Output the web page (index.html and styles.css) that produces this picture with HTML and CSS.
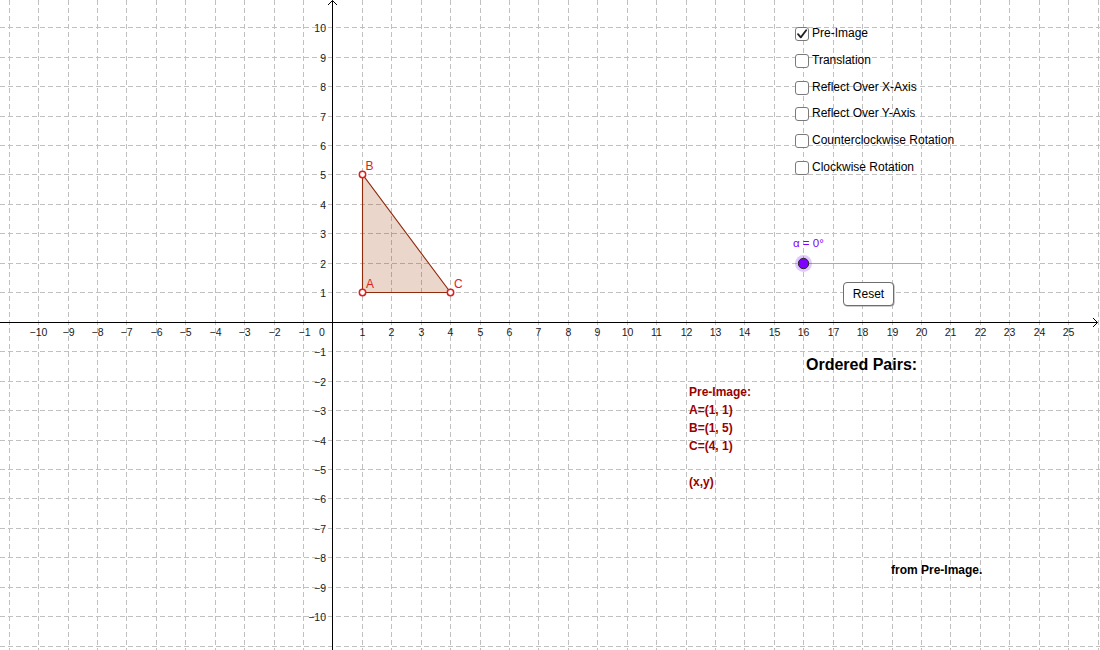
FILE: index.html
```html
<!DOCTYPE html>
<html lang="en">
<head>
<meta charset="utf-8">
<title>Transformations</title>
<link rel="stylesheet" href="styles.css">
</head>
<body>
<div class="applet">
  <svg class="graph" width="1100" height="650" viewBox="0 0 1100 650">
    <path class="grid" d="M9.5 0V650M38.5 0V650M68.5 0V650M97.5 0V650M126.5 0V650M156.5 0V650M185.5 0V650M215.5 0V650M244.5 0V650M274.5 0V650M303.5 0V650M362.5 0V650M391.5 0V650M421.5 0V650M450.5 0V650M480.5 0V650M509.5 0V650M538.5 0V650M568.5 0V650M597.5 0V650M627.5 0V650M656.5 0V650M686.5 0V650M715.5 0V650M744.5 0V650M774.5 0V650M803.5 0V650M833.5 0V650M862.5 0V650M892.5 0V650M921.5 0V650M950.5 0V650M980.5 0V650M1009.5 0V650M1039.5 0V650M1068.5 0V650M1098.5 0V650"/>
    <path class="grid" d="M0 27.5H1100M0 57.5H1100M0 86.5H1100M0 116.5H1100M0 145.5H1100M0 174.5H1100M0 204.5H1100M0 233.5H1100M0 263.5H1100M0 292.5H1100M0 351.5H1100M0 381.5H1100M0 410.5H1100M0 440.5H1100M0 469.5H1100M0 498.5H1100M0 528.5H1100M0 557.5H1100M0 587.5H1100M0 616.5H1100M0 646.5H1100"/>

    <path class="axis" d="M0 322.5H1097.5M1093 318L1097.5 322.5L1093 327M332.5 650V0.5M328 5L332.5 0.5L337 5"/>

    <g class="tick tick-x">
      <text x="38.5" y="336">−10</text><text x="68.5" y="336">−9</text><text x="97.5" y="336">−8</text>
      <text x="126.5" y="336">−7</text><text x="156.5" y="336">−6</text><text x="185.5" y="336">−5</text>
      <text x="215.5" y="336">−4</text><text x="244.5" y="336">−3</text><text x="274.5" y="336">−2</text>
      <text x="304.5" y="336">−1</text><text x="322" y="336">0</text>
      <text x="362.5" y="336">1</text><text x="391.5" y="336">2</text><text x="421.5" y="336">3</text>
      <text x="450.5" y="336">4</text><text x="480.5" y="336">5</text><text x="509.5" y="336">6</text>
      <text x="538.5" y="336">7</text><text x="568.5" y="336">8</text><text x="597.5" y="336">9</text>
      <text x="627.5" y="336">10</text><text x="656.5" y="336">11</text><text x="686.5" y="336">12</text>
      <text x="715.5" y="336">13</text><text x="744.5" y="336">14</text><text x="774.5" y="336">15</text>
      <text x="803.5" y="336">16</text><text x="833.5" y="336">17</text><text x="862.5" y="336">18</text>
      <text x="892.5" y="336">19</text><text x="921.5" y="336">20</text><text x="950.5" y="336">21</text>
      <text x="980.5" y="336">22</text><text x="1009.5" y="336">23</text><text x="1039.5" y="336">24</text>
      <text x="1068.5" y="336">25</text>
    </g>
    <g class="tick tick-y">
      <text x="326" y="31.5">10</text><text x="326" y="61.5">9</text><text x="326" y="90.5">8</text>
      <text x="326" y="120.5">7</text><text x="326" y="149.5">6</text><text x="326" y="178.5">5</text>
      <text x="326" y="208.5">4</text><text x="326" y="237.5">3</text><text x="326" y="267.5">2</text>
      <text x="326" y="296.5">1</text>
      <text x="326" y="355.5">−1</text><text x="326" y="385.5">−2</text><text x="326" y="414.5">−3</text>
      <text x="326" y="444.5">−4</text><text x="326" y="473.5">−5</text><text x="326" y="502.5">−6</text>
      <text x="326" y="532.5">−7</text><text x="326" y="561.5">−8</text><text x="326" y="591.5">−9</text>
      <text x="326" y="620.5">−10</text>
    </g>

    <polygon class="tri" points="362.5,292.5 362.5,174.5 450.5,292.5"/>
    <circle class="pt" cx="362.5" cy="292.5" r="3.2"/>
    <circle class="pt" cx="362.5" cy="174.5" r="3.2"/>
    <circle class="pt" cx="450.5" cy="292.5" r="3.2"/>
    <text class="pt-label" x="365.5" y="169.5">B</text>
    <text class="pt-label" x="366" y="288">A</text>
    <text class="pt-label" x="454" y="287.5">C</text>

    <path class="slider-line" d="M803.5 263.5H921"/>
    <circle class="slider-halo" cx="803.5" cy="263.5" r="8.5"/>
    <circle class="slider-dot" cx="803.5" cy="263.5" r="5.2"/>
    <text class="slider-label" x="793" y="247">α = 0°</text>
  </svg>

  <ul class="checks">
    <li class="check"><span class="box is-on"><svg width="12" height="12" viewBox="0 0 12 12"><path d="M2 6.2L4.8 9.4L10.2 2.2"/></svg></span><span class="check-label">Pre-Image</span></li>
    <li class="check"><span class="box"></span><span class="check-label">Translation</span></li>
    <li class="check"><span class="box"></span><span class="check-label">Reflect Over X-Axis</span></li>
    <li class="check"><span class="box"></span><span class="check-label">Reflect Over Y-Axis</span></li>
    <li class="check"><span class="box"></span><span class="check-label">Counterclockwise Rotation</span></li>
    <li class="check"><span class="box"></span><span class="check-label">Clockwise Rotation</span></li>
  </ul>

  <button class="reset" type="button">Reset</button>

  <h2 class="pairs-title">Ordered Pairs:</h2>
  <div class="pairs">
    <p class="pair-line">Pre-Image:</p>
    <p class="pair-line">A=(1, 1)</p>
    <p class="pair-line">B=(1, 5)</p>
    <p class="pair-line">C=(4, 1)</p>
    <p class="pair-line pair-gap">(x,y)</p>
  </div>

  <p class="note">from Pre-Image.</p>
</div>
</body>
</html>
```

FILE: styles.css
```css
* { box-sizing: border-box; }

html, body {
  margin: 0;
  padding: 0;
  background: #ffffff;
}

body {
  font-family: "Liberation Sans", Arial, sans-serif;
  color: #000;
  overflow: hidden;
}

.applet {
  position: relative;
  width: 1100px;
  height: 650px;
  overflow: hidden;
}

.graph {
  display: block;
}

.grid {
  fill: none;
  stroke: #c0c0c0;
  stroke-width: 1;
  stroke-dasharray: 5 3;
  shape-rendering: crispEdges;
}

.axis {
  fill: none;
  stroke: #000;
  stroke-width: 1;
}

.tick {
  font-family: "Liberation Sans", Arial, sans-serif;
  font-size: 10.5px;
  fill: #1a1a1a;
}

.tick-x { text-anchor: middle; }
.tick-y { text-anchor: end; }

.tri {
  fill: rgba(153, 51, 0, 0.2);
  stroke: #8f2a0a;
  stroke-width: 1.1;
}

.pt {
  fill: #ffffff;
  stroke: #e01e1e;
  stroke-width: 1.5;
}

.pt-label {
  font-family: "Liberation Sans", Arial, sans-serif;
  font-size: 12px;
  fill: #e01e1e;
}

.slider-line {
  stroke: #b59be6;
  stroke-width: 1;
  fill: none;
}

.slider-halo {
  fill: rgba(127, 0, 255, 0.22);
}

.slider-dot {
  fill: #7f00ff;
  stroke: #2a2a2a;
  stroke-width: 1;
}

.slider-label {
  font-family: "Liberation Sans", Arial, sans-serif;
  font-size: 11.5px;
  fill: #8000ff;
}

/* checkboxes */
.checks {
  position: absolute;
  left: 795px;
  top: 27px;
  margin: 0;
  padding: 0;
  list-style: none;
  display: flex;
  flex-direction: column;
  gap: 12.8px;
}

.check {
  display: flex;
  align-items: flex-start;
  gap: 3px;
  height: 14px;
}

.box {
  flex: none;
  width: 14px;
  height: 14px;
  border: 1.3px solid #7a7a7a;
  border-radius: 3px;
  background: #fff;
  display: flex;
  align-items: center;
  justify-content: center;
}

.box svg path {
  fill: none;
  stroke: #222;
  stroke-width: 1.8;
  stroke-linecap: round;
  stroke-linejoin: round;
}

.check-label {
  font-size: 12px;
  line-height: 12px;
  color: #000;
  white-space: nowrap;
}

/* reset button */
.reset {
  position: absolute;
  left: 843px;
  top: 282px;
  width: 51px;
  height: 24px;
  padding: 0;
  background: #fff;
  border: 1.5px solid #6e6e6e;
  border-radius: 4px;
  box-shadow: 0.5px 0.5px 0 #9a9a9a;
  font-family: "Liberation Sans", Arial, sans-serif;
  font-size: 12px;
  color: #000;
}

/* ordered pairs text */
.pairs-title {
  position: absolute;
  left: 806px;
  top: 357px;
  margin: 0;
  font-size: 16px;
  line-height: 16px;
  font-weight: bold;
  white-space: nowrap;
}

.pairs {
  position: absolute;
  left: 689px;
  top: 382.5px;
  color: #990000;
  font-size: 12px;
  font-weight: bold;
}

.pair-line {
  margin: 0;
  line-height: 18px;
  white-space: nowrap;
}

.pair-gap {
  margin-top: 18px;
}

.note {
  position: absolute;
  left: 891px;
  top: 561px;
  margin: 0;
  font-size: 12px;
  line-height: 18px;
  font-weight: bold;
  white-space: nowrap;
}
```
